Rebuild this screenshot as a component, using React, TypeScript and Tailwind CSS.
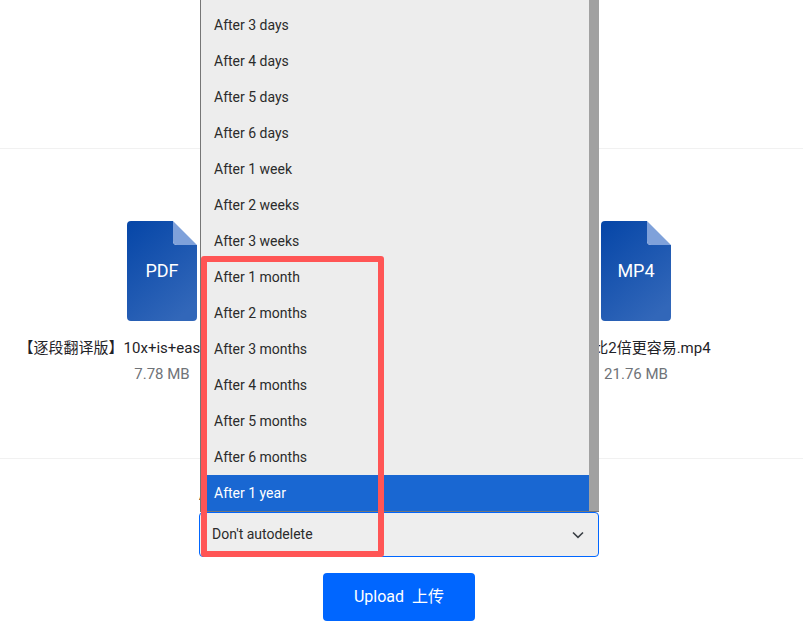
import React from "react";

const options = [
  "After 3 days",
  "After 4 days",
  "After 5 days",
  "After 6 days",
  "After 1 week",
  "After 2 weeks",
  "After 3 weeks",
  "After 1 month",
  "After 2 months",
  "After 3 months",
  "After 4 months",
  "After 5 months",
  "After 6 months",
  "After 1 year",
];

function FileIcon({ label, id }: { label: string; id: string }) {
  return (
    <div className="relative w-[70px] h-[100px] flex items-center justify-center">
      <svg className="absolute inset-0" width="70" height="100" viewBox="0 0 70 100">
        <defs>
          <linearGradient id={id} x1="0.1" y1="0" x2="0.7" y2="1">
            <stop offset="0" stopColor="#0747a8" />
            <stop offset="1" stopColor="#3267b9" />
          </linearGradient>
        </defs>
        <path
          d="M4 0H46V20a4 4 0 0 0 4 4H70V96a4 4 0 0 1-4 4H4a4 4 0 0 1-4-4V4a4 4 0 0 1 4-4Z"
          fill={`url(#${id})`}
        />
        <path d="M46 0L70 24H50a4 4 0 0 1-4-4Z" fill="#7fa1da" />
      </svg>
      <span className="relative text-white text-[18px] leading-none">{label}</span>
    </div>
  );
}

function FileItem({ label, id, name, size }: { label: string; id: string; name: string; size: string }) {
  return (
    <div className="w-[150px] flex flex-col items-center">
      <FileIcon label={label} id={id} />
      <div className="mt-[17px] h-5 leading-5 text-[15px] text-[#1f2328] whitespace-nowrap">{name}</div>
      <div className="mt-[6px] h-5 leading-5 text-[15px] text-[#6f7378] whitespace-nowrap">{size}</div>
    </div>
  );
}

export default function App() {
  return (
    <div className="relative h-[639px] w-[803px] overflow-hidden bg-white font-['Roboto','Noto_Sans_CJK_SC',sans-serif]">
      <div className="h-[149px] border-b border-[#f1f1f1]" />
      <div className="h-[310px] border-b border-[#f1f1f1] pt-[72px] pr-[5px] flex justify-center gap-[324px]">
        <FileItem label="PDF" id="g1" name="【逐段翻译版】10x+is+easier+than+2x.pdf" size="7.78 MB" />
        <FileItem label="MP4" id="g2" name="10倍比2倍更容易.mp4" size="21.76 MB" />
      </div>
      <div className="flex flex-col items-center pt-[26px]">
        <div className="w-[400px] h-[27px] mr-[5px] text-sm leading-5 text-[#1f2328]">Autodelete file</div>
        <div className="w-[400px] h-[45px] mr-[5px] pb-[2px] flex items-center justify-between rounded-[4px] border border-[#0066ff] bg-[#eeeeee] pl-3 pr-[14px] text-sm text-[#2b2b2b]">
          <span>Don't autodelete</span>
          <svg className="mt-[2px]" width="12" height="8" viewBox="0 0 12 8" fill="none" stroke="#3a3f45" strokeWidth="1.6">
            <path d="M1 1.5L6 6.3L11 1.5" />
          </svg>
        </div>
        <button className="mt-4 mr-[5px] w-[152px] h-12 rounded-[4px] bg-[#0066ff] text-white text-base">
          Upload &nbsp;上传
        </button>
      </div>

      <div className="absolute left-[200px] top-0 h-[512px] w-[399px] flex border-l border-b border-[#767676] bg-[#ededed]">
        <div className="flex-1 pt-[7px]">
          {options.map((o) => (
            <div
              key={o}
              className={
                o === "After 1 year"
                  ? "h-9 pl-[13px] leading-9 text-sm bg-[#1967d2] text-white"
                  : "h-9 pl-[13px] leading-9 text-sm text-[#2b2b2b]"
              }
            >
              {o}
            </div>
          ))}
        </div>
        <div className="w-[10px] bg-[#a1a1a1]" />
      </div>

      <div className="absolute left-[201px] top-[256px] w-[183px] h-[301px] rounded-[3px] border-[6px] border-[#ff5555]" />
    </div>
  );
}
